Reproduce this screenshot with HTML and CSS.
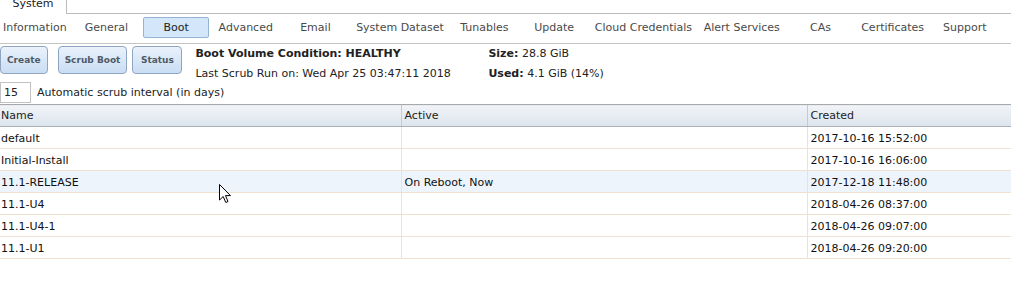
FILE: index.html
```html
<!DOCTYPE html>
<html lang="en">
<head>
    <meta charset="UTF-8">
    <title>System - Boot</title>
    <link rel="stylesheet" href="styles.css">
</head>
<body>
    <div class="tabbar">
        <div class="tab">System</div>
        <div class="tab-rest"></div>
    </div>

    <nav class="subnav">
        <a class="subnav-item">Information</a>
        <a class="subnav-item">General</a>
        <a class="subnav-item active">Boot</a>
        <a class="subnav-item">Advanced</a>
        <a class="subnav-item">Email</a>
        <a class="subnav-item">System Dataset</a>
        <a class="subnav-item">Tunables</a>
        <a class="subnav-item">Update</a>
        <a class="subnav-item">Cloud Credentials</a>
        <a class="subnav-item">Alert Services</a>
        <a class="subnav-item">CAs</a>
        <a class="subnav-item">Certificates</a>
        <a class="subnav-item">Support</a>
    </nav>

    <div class="toolbar">
        <div class="actions">
            <button class="btn btn-create">Create</button>
            <button class="btn">Scrub Boot</button>
            <button class="btn btn-status">Status</button>
        </div>
        <div class="status-info">
            <div class="status-col main">
                <div><b>Boot Volume Condition: HEALTHY</b></div>
                <div>Last Scrub Run on: Wed Apr 25 03:47:11 2018</div>
            </div>
            <div class="status-col">
                <div><b>Size:</b> 28.8 GiB</div>
                <div><b>Used:</b> 4.1 GiB (14%)</div>
            </div>
        </div>
    </div>

    <div class="interval">
        <input class="interval-input" type="text" value="15">
        <label>Automatic scrub interval (in days)</label>
    </div>

    <table class="grid">
        <thead>
            <tr>
                <th class="col-name">Name</th>
                <th class="col-active">Active</th>
                <th>Created</th>
            </tr>
        </thead>
        <tbody>
            <tr><td>default</td><td></td><td>2017-10-16 15:52:00</td></tr>
            <tr><td>Initial-Install</td><td></td><td>2017-10-16 16:06:00</td></tr>
            <tr class="hover"><td>11.1-RELEASE</td><td>On Reboot, Now</td><td>2017-12-18 11:48:00</td></tr>
            <tr><td>11.1-U4</td><td></td><td>2018-04-26 08:37:00</td></tr>
            <tr><td>11.1-U4-1</td><td></td><td>2018-04-26 09:07:00</td></tr>
            <tr><td>11.1-U1</td><td></td><td>2018-04-26 09:20:00</td></tr>
        </tbody>
    </table>

    <!-- ponteiro do mouse -->
    <svg class="cursor" width="13" height="20" viewBox="0 0 13 20">
        <path d="M0.5 0.5 L0.5 16 L4.2 12.5 L6.8 18.5 L9 17.5 L6.5 11.6 L11.5 11.6 Z" fill="#fff" stroke="#000" stroke-width="1"/>
    </svg>
</body>
</html>
```

FILE: styles.css
```css
* {
    margin: 0;
    padding: 0;
    box-sizing: border-box;
}

body {
    font-family: "DejaVu Sans", Verdana, sans-serif;
    font-size: 11px;
    color: #222;
    background: #fff;
    position: relative;
}

/* Aba superior */
.tabbar {
    display: flex;
    height: 14px;
}

.tab {
    width: 67px;
    border-right: 1px solid #bbb;
    text-align: center;
    line-height: 7px;
    color: #222;
    overflow: hidden;
}

.tab-rest {
    flex: 1;
    border-bottom: 1px solid #bbb;
}

/* Sub menu */
.subnav {
    display: flex;
    gap: 3.7px;
    padding: 3px 0 5px 0;
    border-bottom: 1px solid #c4c4c4;
}

.subnav-item {
    min-width: 66px;
    height: 21px;
    padding: 0 3px;
    line-height: 19px;
    text-align: center;
    color: #4a4a4a;
    white-space: nowrap;
    border: 1px solid transparent;
}

.subnav-item:first-child {
    padding: 0 2px;
}

.subnav-item.active {
    background: #d4e6f9;
    border-color: #94b4d6;
    border-radius: 2px;
    color: #222;
}

/* Botões e status */
.toolbar {
    display: flex;
    height: 36px;
}

.actions {
    display: flex;
    gap: 5px;
    padding-top: 2px;
}

.btn {
    height: 28px;
    padding: 0 6px;
    font-family: "DejaVu Sans", Verdana, sans-serif;
    font-size: 9px;
    font-weight: bold;
    color: #4f5a66;
    background: linear-gradient(#eaf2fc, #c9ddf3);
    border: 1px solid #8ea6c2;
    border-radius: 4px;
}

.btn-create {
    margin-right: 5px;
}

.btn-status {
    min-width: 50px;
}

.status-info {
    display: flex;
    margin-left: 13px;
}

.status-col {
    line-height: 20px;
}

.status-col.main {
    width: 293px;
}

/* Intervalo */
.interval {
    display: flex;
    align-items: center;
    gap: 6px;
    height: 24px;
}

.interval-input {
    width: 31px;
    height: 21px;
    padding-left: 3px;
    font-family: "DejaVu Sans", Verdana, sans-serif;
    font-size: 11px;
    color: #222;
    border: 1px solid #c2c2c2;
}

/* Tabela */
.grid {
    width: 100%;
    border-collapse: collapse;
    table-layout: fixed;
}

.grid th {
    height: 22px;
    padding: 0 3px;
    font-weight: normal;
    text-align: left;
    color: #222;
    background: linear-gradient(#f1f4f8, #dce4ec);
    border-top: 1px solid #a9a9a9;
    border-bottom: 1px solid #a8b0b9;
    border-left: 1px solid #c3cad2;
}

.grid td {
    height: 22px;
    padding: 1px 3px 0 3px;
    color: #111;
    border-bottom: 1px solid #f0e0cf;
    border-left: 1px solid #f0e0cf;
}

.grid th:first-child,
.grid td:first-child {
    border-left: none;
    padding-left: 1px;
}

.col-name {
    width: 401px;
}

.col-active {
    width: 406px;
}

.grid tr.hover td {
    background: #eef4fc;
}

.cursor {
    position: absolute;
    left: 219px;
    top: 184px;
}
```
